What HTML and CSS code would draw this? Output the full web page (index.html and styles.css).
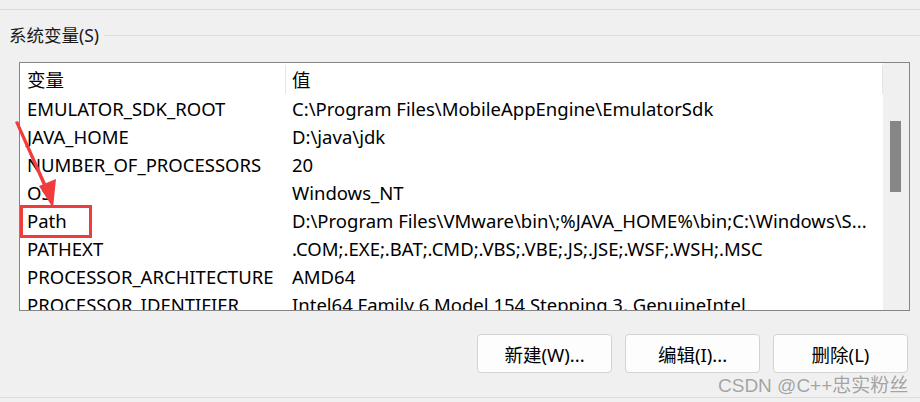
FILE: index.html
```html
<!DOCTYPE html>
<html lang="zh-CN">
<head>
  <meta charset="UTF-8">
  <meta name="viewport" content="width=device-width, initial-scale=1">
  <title>系统变量</title>
  <link rel="stylesheet" href="styles.css">
</head>
<body>
  <div class="window">
    <div class="top-strip"></div>

    <div class="group-title">
      <span class="group-label">系统变量(S)</span>
      <span class="group-line"></span>
    </div>

    <div class="list">
      <div class="list-body">
        <div class="row head">
          <div class="cell name">变量</div>
          <div class="cell value">值</div>
        </div>
        <div class="row">
          <div class="cell name">EMULATOR_SDK_ROOT</div>
          <div class="cell value">C:\Program Files\MobileAppEngine\EmulatorSdk</div>
        </div>
        <div class="row">
          <div class="cell name">JAVA_HOME</div>
          <div class="cell value">D:\java\jdk</div>
        </div>
        <div class="row">
          <div class="cell name">NUMBER_OF_PROCESSORS</div>
          <div class="cell value">20</div>
        </div>
        <div class="row">
          <div class="cell name">OS</div>
          <div class="cell value">Windows_NT</div>
        </div>
        <div class="row">
          <div class="cell name">Path</div>
          <div class="cell value">D:\Program Files\VMware\bin\;%JAVA_HOME%\bin;C:\Windows\S...</div>
        </div>
        <div class="row">
          <div class="cell name">PATHEXT</div>
          <div class="cell value">.COM;.EXE;.BAT;.CMD;.VBS;.VBE;.JS;.JSE;.WSF;.WSH;.MSC</div>
        </div>
        <div class="row">
          <div class="cell name">PROCESSOR_ARCHITECTURE</div>
          <div class="cell value">AMD64</div>
        </div>
        <div class="row">
          <div class="cell name">PROCESSOR_IDENTIFIER</div>
          <div class="cell value">Intel64 Family 6 Model 154 Stepping 3, GenuineIntel</div>
        </div>
      </div>
      <div class="scrollbar">
        <div class="thumb"></div>
      </div>
    </div>

    <div class="actions">
      <button class="btn">新建(W)...</button>
      <button class="btn">编辑(I)...</button>
      <button class="btn">删除(L)</button>
    </div>

    <div class="bottom-strip"></div>

    <!-- annotation overlay -->
    <div class="mark-box"></div>
    <svg class="mark-arrow" width="70" height="100" viewBox="0 0 70 100">
      <path d="M15 10 L18 9 L48 76 L45 78 Z" fill="#f03c3c"/>
      <path d="M39 74 L56 67 L53 96 Z" fill="#f03c3c"/>
    </svg>
    <div class="watermark">CSDN @C++忠实粉丝</div>
  </div>
</body>
</html>
```

FILE: styles.css
```css
* {
  margin: 0;
  padding: 0;
  box-sizing: border-box;
}
body {
  font-family: 'Noto Sans', 'Noto Sans CJK SC', sans-serif;
  background-color: #f0f0f0;
  color: #000;
  width: 920px;
  height: 402px;
  overflow: hidden;
}
.window {
  position: relative;
  width: 920px;
  height: 402px;
}
.top-strip {
  height: 10px;
  border-bottom: 1px solid #dadada;
}
.group-title {
  display: flex;
  align-items: center;
  height: 20px;
  margin-top: 15px;
  padding-left: 9px;
}
.group-label {
  font-size: 17.5px;
  line-height: 20px;
  color: #1a1a1a;
}
.group-line {
  flex: 1;
  height: 1px;
  margin-left: 5px;
  background-color: #dcdcdc;
}
.list {
  display: flex;
  margin-top: 17px;
  margin-left: 19px;
  width: 891px;
  height: 249px;
  border: 1px solid #858585;
  background-color: #fff;
  overflow: hidden;
}
.list-body {
  flex: 1;
  overflow: hidden;
}
.row {
  display: flex;
  height: 28px;
  align-items: center;
  font-size: 18.5px;
  white-space: nowrap;
}
.row.head {
  height: 31px;
}
.cell {
  overflow: hidden;
}
.name {
  width: 266px;
  padding-left: 7px;
}
.value {
  flex: 1;
  padding-left: 6px;
}
.head .cell {
  height: 29px;
  line-height: 29px;
  margin-top: 1px;
  border-right: 1px solid #e5e5e5;
}
.scrollbar {
  width: 26px;
  background-color: #f0f0f0;
}
.thumb {
  width: 11px;
  height: 71px;
  margin-top: 58px;
  margin-left: 7px;
  background-color: #868686;
}
.actions {
  display: flex;
  justify-content: flex-end;
  gap: 13px;
  margin-top: 23px;
  padding-right: 12px;
}
.btn {
  width: 135px;
  height: 39px;
  font-family: inherit;
  font-size: 18.5px;
  color: #000;
  background-color: #fdfdfd;
  border: 1px solid #d3d3d3;
  border-radius: 4px;
}
.bottom-strip {
  margin-top: 24px;
  border-top: 1px solid #dcdcdc;
}
.mark-box {
  position: absolute;
  left: 20px;
  top: 205px;
  width: 72px;
  height: 33px;
  border: 3px solid #ee3d3d;
}
.mark-arrow {
  position: absolute;
  left: 0;
  top: 112px;
}
.watermark {
  position: absolute;
  left: 718px;
  top: 370px;
  font-family: 'Liberation Sans', 'Noto Sans CJK SC', sans-serif;
  font-size: 19px;
  color: #a3a3a3;
  text-shadow: 0 0 1px #fff;
  white-space: nowrap;
}
```
